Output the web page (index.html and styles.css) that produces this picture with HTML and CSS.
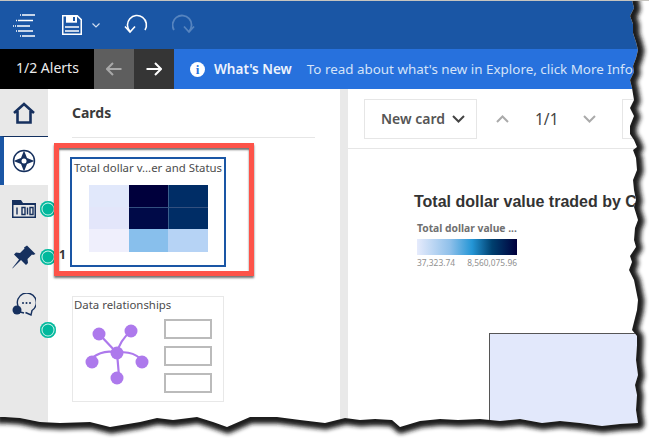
FILE: index.html
```html
<!DOCTYPE html>
<html lang="en">
<head>
    <meta charset="UTF-8">
    <meta name="viewport" content="width=device-width, initial-scale=1.0">
    <title>Explore - Cards</title>
    <link rel="stylesheet" href="styles.css">
</head>
<body>
    <div class="page">
        <!-- Top toolbar -->
        <header class="topbar">
            <svg class="tool tool-menu" width="24" height="24" viewBox="0 0 24 24">
                <path class="line-white" d="M8 2h1M10 2h13M4 7.500h1M6 7.500h15M1 13h1M3 13h1M5 13h13M4 18h1M6 18h15M8 23h1M10 23h13"/>
            </svg>
            <svg class="tool tool-save" width="20" height="20" viewBox="0 0 20 20">
                <path class="line-white" d="M.7.700h14.500l4.100 4.100v14.500H.7z"/>
                <path class="fill-white" d="M4 .7h11v7H4z"/>
                <path class="fill-blue" d="M11 2h2v4h-2z"/>
                <path class="line-white" d="M3 12h14M3 16h14"/>
            </svg>
            <svg class="tool tool-caret" width="8" height="5" viewBox="0 0 8 5">
                <path class="line-soft" d="M.5.5L4 4 7.500.5"/>
            </svg>
            <svg class="tool tool-undo" width="24" height="22" viewBox="0 0 24 22">
                <path class="line-white" d="M21 16A9.500 9.500 0 1 0 6 17.500"/>
                <path class="line-white" d="M1 12.500l5 5.500 5-5.500"/>
            </svg>
            <svg class="tool tool-redo" width="24" height="22" viewBox="0 0 24 22">
                <path class="line-dim" d="M2 16A9.500 9.500 0 1 1 17 17.500"/>
                <path class="line-dim" d="M12 12.500l5 5.500 5-5.500"/>
            </svg>
        </header>

        <!-- Alerts strip -->
        <div class="alerts">
            <div class="alerts-count">1/2 Alerts</div>
            <div class="alerts-btn alerts-prev">
                <svg width="16" height="14" viewBox="0 0 16 14"><path class="line-grey" d="M15.500 7H1M7 1L1 7l6 6"/></svg>
            </div>
            <div class="alerts-btn alerts-next">
                <svg width="16" height="14" viewBox="0 0 16 14"><path class="line-white2" d="M.5 7H15M9 1l6 6-6 6"/></svg>
            </div>
            <div class="alerts-msg">
                <span class="info-dot">i</span>
                <span class="msg-title">What's New</span>
                <span class="msg-text">To read about what's new in Explore, click More Info</span>
            </div>
        </div>

        <div class="main">
            <!-- Left icon rail -->
            <nav class="rail">
                <div class="rail-item">
                    <svg width="24" height="22" viewBox="0 0 24 22">
                        <path class="line-navy" d="M2 11L12 2l10 9M5.500 9v11.500h13V9"/>
                    </svg>
                </div>
                <div class="rail-item rail-active">
                    <svg width="24" height="24" viewBox="0 0 24 24">
                        <circle class="line-navy-thin" cx="12" cy="12" r="10.500"/>
                        <path class="fill-navy" d="M12 1.500l3 7.500 7.500 3-7.500 3-3 7.500-3-7.500L1.500 12 9 9z"/>
                        <circle class="fill-paper" cx="12" cy="12" r="2.500"/>
                    </svg>
                </div>
                <div class="rail-item">
                    <svg width="24" height="18" viewBox="0 0 24 18">
                        <path class="fill-navy" d="M0 0h9l2 3h13v15H0z"/>
                        <path class="fill-rail" d="M1.500 5h21v11.500h-21z"/>
                        <path class="line-navy-thin" d="M5 7.500v7M10 7.500h3v7h-3zM15.500 7.500v7M18 7.500h3v7h-3z"/>
                    </svg>
                </div>
                <div class="rail-item">
                    <svg width="24" height="24" viewBox="0 0 24 24">
                        <path class="fill-navy" d="M15 .5l8.500 8.500-2.500 1-1-.5-4.500 4.500.5 4-2 2-5-5L1 23l-1 .5L7 14.500l-5-5 2-2 4 .5 4.500-4.500-.5-1z"/>
                    </svg>
                </div>
                <div class="rail-item">
                    <svg width="24" height="24" viewBox="0 0 24 24">
                        <path class="line-navy-thin" d="M6 13A9.500 9.500 0 1 1 20 17.500L19 22l-5.500-2.500"/>
                        <circle class="fill-navy" cx="5" cy="17" r="4.500"/>
                        <path class="line-navy-thin" d="M4 18l8 2"/>
                        <circle class="fill-navy" cx="11" cy="10" r="1"/>
                        <circle class="fill-navy" cx="14.500" cy="10" r="1"/>
                        <circle class="fill-navy" cx="18" cy="10" r="1"/>
                    </svg>
                </div>
            </nav>

            <!-- Cards panel -->
            <section class="panel">
                <h2 class="panel-title">Cards</h2>
                <div class="card card-selected">
                    <div class="card-title">Total dollar v...er and Status</div>
                    <div class="heatmap">
                        <div class="h11"></div><div class="h12"></div><div class="h13"></div>
                        <div class="h21"></div><div class="h22"></div><div class="h23"></div>
                        <div class="h31"></div><div class="h32"></div><div class="h33"></div>
                    </div>
                </div>
                <div class="card card-plain">
                    <div class="card-title">Data relationships</div>
                    <div class="rel-body">
                        <svg class="rel-graph" width="66" height="66" viewBox="0 0 66 66">
                            <path class="line-purple" d="M33 33L15 14M33 33C35 24 40 17 47 11M33 33C24 30 16 32 8 38M33 33C42 31 50 33 57 39M33 33L35 56"/>
                            <circle class="fill-purple" cx="33" cy="33" r="6.500"/>
                            <circle class="fill-purple" cx="15" cy="14" r="6.500"/>
                            <circle class="fill-purple" cx="47" cy="11" r="6.500"/>
                            <circle class="fill-purple" cx="8" cy="42" r="6.500"/>
                            <circle class="fill-purple" cx="58" cy="42" r="6.500"/>
                            <circle class="fill-purple" cx="33" cy="58" r="6.500"/>
                        </svg>
                        <div class="rel-boxes">
                            <div class="rel-box"></div>
                            <div class="rel-box"></div>
                            <div class="rel-box"></div>
                        </div>
                    </div>
                </div>
            </section>

            <!-- Card view -->
            <section class="view">
                <div class="view-toolbar">
                    <div class="new-card">
                        New card
                        <svg width="13" height="8" viewBox="0 0 13 8"><path class="line-dark" d="M1 1l5.500 5.500L12 1"/></svg>
                    </div>
                    <svg class="pager-up" width="13" height="8" viewBox="0 0 13 8"><path class="line-pager" d="M1 7l5.500-5.500L12 7"/></svg>
                    <span class="pager-num">1/1</span>
                    <svg class="pager-down" width="13" height="8" viewBox="0 0 13 8"><path class="line-pager" d="M1 1l5.500 5.500L12 1"/></svg>
                    <div class="view-box"></div>
                </div>
                <h3 class="chart-title">Total dollar value traded by C</h3>
                <div class="legend">
                    <div class="legend-title">Total dollar value ...</div>
                    <div class="legend-bar"></div>
                    <div class="legend-labels"><span>37,323.74</span><span>8,560,075.96</span></div>
                </div>
                <div class="chart-cell"></div>
            </section>
        </div>

        <!-- Status dots that sit over the rail edge -->
        <span class="dot dot-a"></span>
        <span class="dot dot-b"></span>
        <span class="dot dot-c"></span>
        <span class="dot-count">1</span>

        <!-- Red callout drawn over the screenshot -->
        <div class="callout"></div>

        <!-- Torn paper edge -->
        <svg class="torn" width="649" height="438" viewBox="0 0 649 438">
            <defs>
                <filter id="soft" x="-5%" y="-5%" width="110%" height="110%"><feGaussianBlur stdDeviation="1.900"/></filter>
                <clipPath id="outside">
                    <path clip-rule="evenodd" d="M0 0H649V438H0Z M632 0L634 8 630 16 633 24 633 33 636 42 638 50 636 58 633 66 634 72 630 80 632 88 634 100 630 108 634 116 630 126 630 134 634 140 637 147 633 150 636 158 637 170 633 180 634 190 636 200 634 207 638 220 635 228 634 240 636 247 630 256 632 262 629 270 634 280 636 290 638 300 637 310 634 322 632 330 637 336 637 345 636 360 638 375 635 385 637 395 636 410 638 423 620 424 602 426 580 423 560 421 542 423 520 419 500 421 480 419 458 420 440 419 420 421 400 427 392 420 375 419 360 420 345 418 325 423 300 420 277 417 250 417 227 427 213 422 197 417 173 420 157 418 140 422 110 427 90 422 60 423 40 422 20 418 5 417 0 417 0 0Z"/>
                </clipPath>
            </defs>
            <path class="torn-white" d="M0 0H649V438H0Z M632 0L634 8 630 16 633 24 633 33 636 42 638 50 636 58 633 66 634 72 630 80 632 88 634 100 630 108 634 116 630 126 630 134 634 140 637 147 633 150 636 158 637 170 633 180 634 190 636 200 634 207 638 220 635 228 634 240 636 247 630 256 632 262 629 270 634 280 636 290 638 300 637 310 634 322 632 330 637 336 637 345 636 360 638 375 635 385 637 395 636 410 638 423 620 424 602 426 580 423 560 421 542 423 520 419 500 421 480 419 458 420 440 419 420 421 400 427 392 420 375 419 360 420 345 418 325 423 300 420 277 417 250 417 227 427 213 422 197 417 173 420 157 418 140 422 110 427 90 422 60 423 40 422 20 418 5 417 0 417 0 0Z"/>
            <g clip-path="url(#outside)">
                <path class="torn-shadow" filter="url(#soft)" d="M632 -4L634 8 630 16 633 24 633 33 636 42 638 50 636 58 633 66 634 72 630 80 632 88 634 100 630 108 634 116 630 126 630 134 634 140 637 147 633 150 636 158 637 170 633 180 634 190 636 200 634 207 638 220 635 228 634 240 636 247 630 256 632 262 629 270 634 280 636 290 638 300 637 310 634 322 632 330 637 336 637 345 636 360 638 375 635 385 637 395 636 410 638 423 620 424 602 426 580 423 560 421 542 423 520 419 500 421 480 419 458 420 440 419 420 421 400 427 392 420 375 419 360 420 345 418 325 423 300 420 277 417 250 417 227 427 213 422 197 417 173 420 157 418 140 422 110 427 90 422 60 423 40 422 20 418 5 417 -4 417"/>
            </g>
        </svg>
    </div>
</body>
</html>
```

FILE: styles.css
```css
/* Global styles */
* {
    box-sizing: border-box;
}

body {
    margin: 0;
    background-color: #fff;
    font-family: 'Noto Sans', 'Open Sans', sans-serif;
    color: #333;
}

.page {
    position: relative;
    width: 649px;
    height: 438px;
    overflow: hidden;
    display: flex;
    flex-direction: column;
    border-top: 1px solid #c6c4bf;
}

/* Top toolbar */
.topbar {
    height: 48px;
    background-color: #1a56a5;
    display: flex;
    align-items: center;
    flex-shrink: 0;
}

.tool {
    display: block;
}

.tool-menu {
    margin-left: 12px;
}

.tool-save {
    margin-left: 26px;
}

.tool-caret {
    margin-left: 10px;
}

.tool-undo {
    margin-left: 24px;
}

.tool-redo {
    margin-left: 24px;
}

/* Alerts strip */
.alerts {
    height: 40px;
    display: flex;
    flex-shrink: 0;
    font-size: 13.5px;
    color: #fff;
}

.alerts-count {
    width: 94px;
    background-color: #000;
    line-height: 38px;
    padding-left: 16px;
    font-size: 14px;
    color: #ececec;
}

.alerts-btn {
    width: 40px;
    display: flex;
    align-items: center;
    justify-content: center;
}

.alerts-prev {
    background-color: #5e5e5e;
}

.alerts-next {
    background-color: #353535;
}

.alerts-msg {
    flex: 1;
    min-width: 0;
    background-color: #2771dd;
    display: flex;
    align-items: center;
    white-space: nowrap;
    padding-left: 16px;
}

.info-dot {
    width: 15px;
    height: 15px;
    border-radius: 50%;
    background-color: #fff;
    color: #2771dd;
    font-family: 'Liberation Serif', serif;
    font-weight: bold;
    font-size: 13px;
    line-height: 15px;
    text-align: center;
}

.msg-title {
    margin-left: 9px;
    font-weight: 600;
    font-size: 13.5px;
    color: #eef3fc;
}

.msg-text {
    margin-left: 15px;
    font-size: 13.4px;
    color: #d5e3f8;
}

/* Main area */
.main {
    flex: 1;
    display: flex;
    min-height: 0;
}

.rail {
    width: 48px;
    background-color: #e8e8e8;
    flex-shrink: 0;
}

.rail-item {
    height: 48px;
    display: flex;
    align-items: center;
    justify-content: center;
}

.rail-active {
    height: 49px;
    margin-top: -1px;
    background-color: #fff;
    border-top: 1px solid #12305f;
    border-left: 4px solid #1a56a5;
    padding-right: 4px;
}

/* Cards panel */
.panel {
    flex-shrink: 0;
    padding: 0 25px 0 24px;
    border-right: 8px solid #e9e9e9;
    width: 300px;
}

.panel-title {
    margin: 0;
    height: 49px;
    line-height: 48px;
    font-size: 14px;
    font-weight: 700;
    color: #3a3a3a;
    border-bottom: 1px solid #e6e6e6;
}

.card {
    width: 152px;
    height: 106px;
    position: relative;
}

.card-selected {
    margin-top: 21px;
    outline: 2px solid #1a56a5;
    padding: 1px;
}

.card-plain {
    margin-top: 31px;
    border: 1px solid #e8e8e8;
}

.card-title {
    font-size: 11.4px;
    line-height: 14px;
    color: #4c4c4c;
    padding: 1px 0 0 1px;
    white-space: nowrap;
}

.heatmap {
    display: grid;
    grid-template-columns: 40px 39px 40px;
    grid-template-rows: 22px 22px 23px;
    margin: 10px 0 0 16px;
    width: 119px;
}

.h11 { background-color: #e1e8fb; }
.h12 { background-color: #00003c; }
.h13 { background-color: #002d66; border-left: 1px solid #3a5f8c; }
.h21 { background-color: #e3e6fa; }
.h22 { background-color: #000a48; border-top: 1px solid #33507f; }
.h23 { background-color: #002d66; border-top: 1px solid #33507f; border-left: 1px solid #3a5f8c; }
.h31 { background-color: #efeffc; }
.h32 { background-color: #88bfec; }
.h33 { background-color: #b6d3f5; }

.rel-body {
    display: flex;
    padding: 7px 0 0 11px;
}

.rel-graph {
    margin-top: 1px;
}

.rel-boxes {
    margin-left: 14px;
    display: flex;
    flex-direction: column;
    gap: 7px;
}

.rel-box {
    width: 48px;
    height: 20px;
    border: 2px solid #bbb;
}

/* Card view */
.view {
    flex: 1;
    min-width: 0;
    overflow: hidden;
    padding-left: 16px;
}

.view-toolbar {
    height: 60px;
    margin-left: -16px;
    padding: 10px 0 10px 16px;
    border-bottom: 1px solid #e6e6e6;
    display: flex;
    align-items: center;
}

.new-card {
    width: 113px;
    height: 40px;
    flex-shrink: 0;
    border: 1px solid #e6e6e6;
    display: flex;
    align-items: center;
    justify-content: space-between;
    padding: 0 11px 0 16px;
    font-size: 14px;
    font-weight: 600;
    color: #555;
}

.pager-up {
    margin-left: 19px;
    flex-shrink: 0;
}

.pager-num {
    margin-left: 26px;
    font-size: 15.5px;
    color: #444;
}

.pager-down {
    margin-left: 24px;
    flex-shrink: 0;
}

.view-box {
    width: 40px;
    height: 40px;
    flex-shrink: 0;
    margin-left: 26px;
    border: 1px solid #e6e6e6;
}

.chart-title {
    margin: 44px 0 0 50px;
    font-family: 'Liberation Sans', sans-serif;
    font-size: 16px;
    line-height: 18px;
    font-weight: 700;
    color: #333;
    white-space: nowrap;
}

.legend {
    width: 100px;
    margin: 10px 0 0 53px;
}

.legend-title {
    font-size: 10.3px;
    line-height: 14px;
    font-weight: 700;
    color: #707070;
    white-space: nowrap;
}

.legend-bar {
    height: 16px;
    margin-top: 4px;
    background: linear-gradient(to right, #e6ebfc, #8fc0ea 33%, #2496d6 55%, #00406f 75%, #00003c);
}

.legend-labels {
    display: flex;
    justify-content: space-between;
    font-size: 8.4px;
    line-height: 11px;
    margin-top: 2px;
    color: #909090;
    white-space: nowrap;
}

.chart-cell {
    height: 100px;
    width: 170px;
    margin: 65px 0 0 125px;
    border: 1px solid #555;
    border-right: 0;
    border-bottom: 0;
    background-color: #e2e8fb;
}

/* Status dots */
.dot {
    position: absolute;
    left: 40px;
    width: 16px;
    height: 16px;
    border-radius: 50%;
    background-color: #00b89c;
    box-shadow: inset 0 0 0 1.5px #00b89c, inset 0 0 0 2.5px #c8f2ea;
}

.dot-a { top: 200px; }
.dot-b { top: 248px; }
.dot-c { top: 321px; }

.dot-count {
    position: absolute;
    left: 59px;
    top: 246px;
    font-size: 12px;
    font-weight: 700;
    line-height: 16px;
    color: #333;
}

/* Callout */
.callout {
    position: absolute;
    left: 54px;
    top: 142px;
    width: 200px;
    height: 133px;
    border: 5px solid #fd5349;
    box-shadow: 0 2px 2px rgba(0, 0, 0, 0.55), inset 0 2px 2px rgba(0, 0, 0, 0.55);
}

/* Torn edge */
.torn {
    position: absolute;
    left: 0;
    top: -1px;
}

.torn-white {
    fill: #fff;
    fill-rule: evenodd;
}

.torn-shadow {
    fill: none;
    stroke: #1c1c1c;
    stroke-width: 11;
    stroke-linejoin: round;
    transform: translate(1px, 1px);
}

/* SVG paints */
.line-white, .line-soft, .line-dim, .line-grey, .line-white2, .line-navy, .line-navy-thin, .line-purple, .line-dark, .line-pager {
    fill: none;
}

.line-white { stroke: #fff; stroke-width: 1.6; }
.line-soft { stroke: #cfdcef; stroke-width: 1.2; }
.line-dim { stroke: #5684bf; stroke-width: 1.8; }
.line-grey { stroke: #a8a8a8; stroke-width: 2; }
.line-white2 { stroke: #fff; stroke-width: 2; }
.line-navy { stroke: #16305e; stroke-width: 2.6; }
.line-navy-thin { stroke: #16305e; stroke-width: 1.4; }
.line-purple { stroke: #ad79ec; stroke-width: 2.2; }
.line-dark { stroke: #444; stroke-width: 2; }
.line-pager { stroke: #aaa; stroke-width: 2; }

.fill-white { fill: #fff; }
.fill-blue { fill: #1a56a5; }
.fill-navy { fill: #16305e; }
.fill-paper { fill: #fff; }
.fill-rail { fill: #e8e8e8; }
.fill-purple { fill: #ad79ec; }
```
